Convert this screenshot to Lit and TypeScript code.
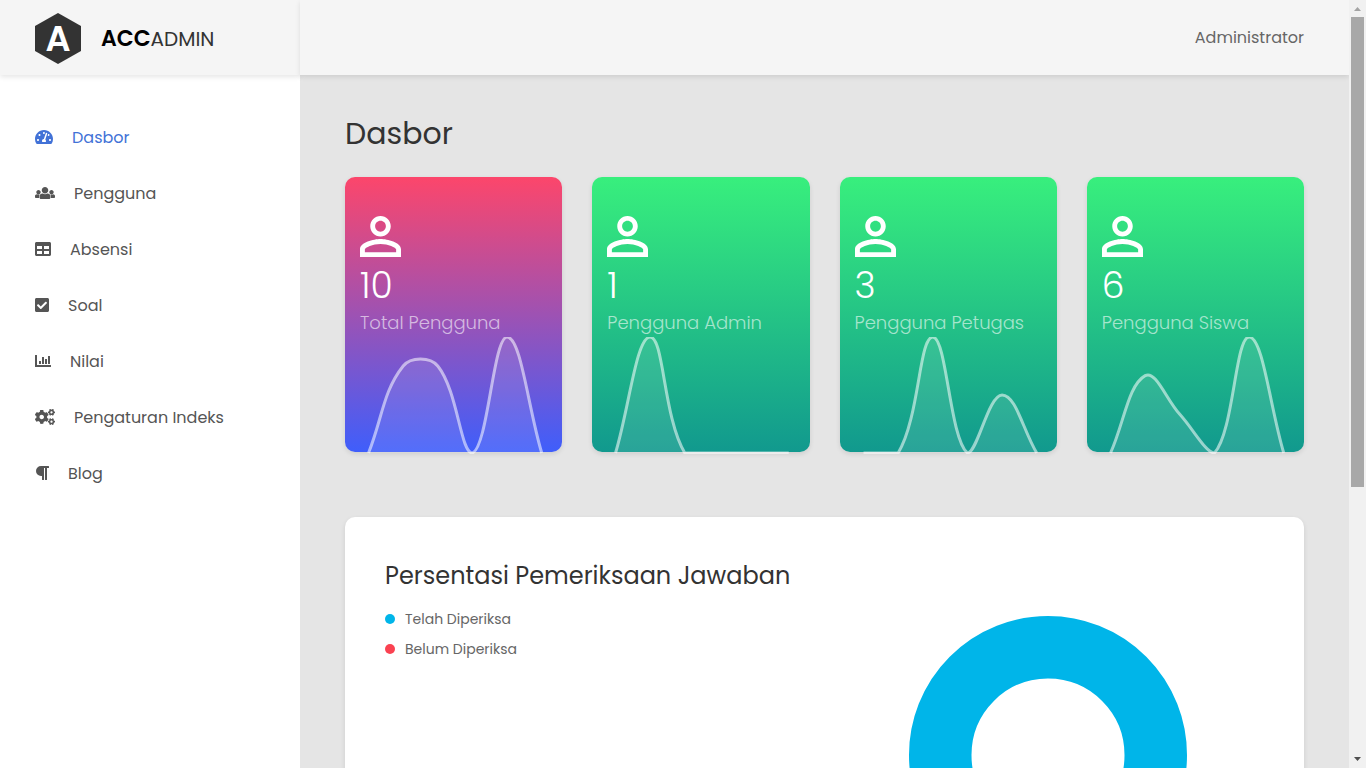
import { LitElement, html, css, svg } from "lit";
import { customElement, property } from "lit/decorators.js";
import { classMap } from "lit/directives/class-map.js";

const SMALL_GEAR =
  "M512.1 191l-8.2 14.3c-3 5.3-9.4 7.5-15.1 5.4-11.8-4.4-22.6-10.7-32.1-18.6-4.6-3.8-5.8-10.5-2.8-15.7l8.2-14.3c-6.9-8-12.3-17.3-15.9-27.4h-16.5c-6 0-11.2-4.3-12.2-10.3-2-12-2.1-24.6 0-37.1 1-6 6.2-10.4 12.2-10.4h16.5c3.6-10.1 9-19.4 15.9-27.4l-8.2-14.3c-3-5.2-1.9-11.9 2.8-15.7 9.5-7.9 20.4-14.2 32.1-18.6 5.7-2.1 12.1.1 15.1 5.4l8.2 14.3c10.5-1.9 21.2-1.9 31.7 0L552 6.3c3-5.3 9.4-7.5 15.1-5.4 11.8 4.4 22.6 10.7 32.1 18.6 4.6 3.8 5.8 10.5 2.8 15.7l-8.2 14.3c6.9 8 12.3 17.3 15.9 27.4h16.5c6 0 11.2 4.3 12.2 10.3 2 12 2.1 24.6 0 37.1-1 6-6.2 10.4-12.2 10.4h-16.5c-3.6 10.1-9 19.4-15.9 27.4l8.2 14.3c3 5.2 1.9 11.9-2.8 15.7-9.5 7.9-20.4 14.2-32.1 18.6-5.7 2.1-12.1-.1-15.1-5.4l-8.2-14.3c-10.4 1.9-21.2 1.9-31.7 0zm-10.5-58.8c38.5 29.6 82.4-14.3 52.8-52.8-38.5-29.7-82.4 14.3-52.8 52.8z";
const BIG_GEAR =
  "M386.3 286.1l33.7 16.8c10.1 5.8 14.5 18.1 10.5 29.1-8.9 24.2-26.4 46.4-42.6 65.8-7.4 8.9-20.2 11.1-30.3 5.3l-29.1-16.8c-16 13.7-34.6 24.6-54.9 31.7v33.6c0 11.6-8.3 21.6-19.7 23.6-24.6 4.2-50.4 4.4-75.9 0-11.5-2-20-11.9-20-23.6V418c-20.3-7.2-38.9-18-54.9-31.7L74 403c-10 5.8-22.9 3.6-30.3-5.3-16.2-19.4-33.3-41.6-42.2-65.7-4-10.9.4-23.2 10.5-29.1l33.3-16.8c-3.9-20.9-3.9-42.4 0-63.4L12 205.8c-10.1-5.8-14.6-18.1-10.5-29 8.9-24.2 26-46.4 42.2-65.8 7.4-8.9 20.2-11.1 30.3-5.3l29.1 16.8c16-13.7 34.6-24.6 54.9-31.7V57.1c0-11.5 8.2-21.5 19.6-23.5 24.6-4.2 50.5-4.4 76-.1 11.5 2 20 11.9 20 23.6v33.6c20.3 7.2 38.9 18 54.9 31.7l29.1-16.8c10-5.8 22.9-3.6 30.3 5.3 16.2 19.4 33.2 41.6 42.1 65.8 4 10.9.1 23.2-10 29.1l-33.7 16.8c3.9 21 3.9 42.5 0 63.5zm-117.6 21.1c59.2-77-28.7-164.9-105.7-105.7-59.2 77 28.7 164.9 105.7 105.7z";

interface MenuItem {
  label: string;
  width: number;
  icon: unknown;
  active?: boolean;
}

const MENU: MenuItem[] = [
  {
    label: "Dasbor",
    width: 576,
    active: true,
    icon: svg`<path d="M288 32C128.94 32 0 160.94 0 320c0 52.8 14.25 102.26 39.06 144.8 5.61 9.62 16.3 15.2 27.44 15.2h443c11.14 0 21.83-5.58 27.44-15.2C561.75 422.26 576 372.8 576 320c0-159.06-128.94-288-288-288zm0 64c14.71 0 26.58 10.13 30.32 23.65-1.11 2.26-2.64 4.23-3.45 6.67l-9.22 27.67c-5.13 3.49-10.97 6.01-17.65 6.01-17.67 0-32-14.33-32-32S270.33 96 288 96zM96 384c-17.67 0-32-14.33-32-32s14.33-32 32-32 32 14.33 32 32-14.33 32-32 32zm48-160c-17.67 0-32-14.33-32-32s14.33-32 32-32 32 14.33 32 32-14.33 32-32 32zm246.77-72.41l-61.33 184C343.13 347.33 352 364.54 352 384c0 11.72-3.38 22.55-8.88 32H232.88c-5.5-9.45-8.88-20.28-8.88-32 0-33.94 26.5-61.43 59.9-63.59l61.34-184.01c4.17-12.56 17.73-19.45 30.36-15.17 12.57 4.19 19.35 17.79 15.17 30.36zm14.66 57.2l15.52-46.55c3.47-1.29 7.13-2.23 11.05-2.23 17.67 0 32 14.33 32 32s-14.33 32-32 32c-11.38-.01-20.89-6.28-26.57-15.22zM480 384c-17.67 0-32-14.33-32-32s14.33-32 32-32 32 14.33 32 32-14.33 32-32 32z"/>`,
  },
  {
    label: "Pengguna",
    width: 640,
    icon: svg`<path d="M320 64c57.99 0 105 47.01 105 105s-47.01 105-105 105-105-47.01-105-105S262.01 64 320 64zm113.463 217.366l-39.982-9.996c-49.168 35.365-108.766 27.473-146.961 0l-39.982 9.996C174.485 289.379 152 318.177 152 351.216V412c0 19.882 16.118 36 36 36h264c19.882 0 36-16.118 36-36v-60.784c0-33.039-22.485-61.837-54.537-69.85zM528 300c38.66 0 70-31.34 70-70s-31.34-70-70-70-70 31.34-70 70 31.34 70 70 70zm-416 0c38.66 0 70-31.34 70-70s-31.34-70-70-70-70 31.34-70 70 31.34 70 70 70zm24 112v-60.784c0-16.551 4.593-32.204 12.703-45.599-29.988 14.72-63.336 8.708-85.69-7.37l-26.655 6.664C14.99 310.252 0 329.452 0 351.477V392c0 13.255 10.745 24 24 24h112.169a52.417 52.417 0 0 1-.169-4zm467.642-107.09l-26.655-6.664c-27.925 20.086-60.89 19.233-85.786 7.218C499.369 318.893 504 334.601 504 351.216V412c0 1.347-.068 2.678-.169 4H616c13.255 0 24-10.745 24-24v-40.523c0-22.025-14.99-41.225-36.358-46.567z"/>`,
  },
  {
    label: "Absensi",
    width: 512,
    icon: svg`<path d="M464 32H48C21.49 32 0 53.49 0 80v352c0 26.51 21.49 48 48 48h416c26.51 0 48-21.49 48-48V80c0-26.51-21.49-48-48-48zM224 416H64v-96h160v96zm0-160H64v-96h160v96zm224 160H288v-96h160v96zm0-160H288v-96h160v96z"/>`,
  },
  {
    label: "Soal",
    width: 448,
    icon: svg`<path d="M400 480H48c-26.51 0-48-21.49-48-48V80c0-26.51 21.49-48 48-48h352c26.51 0 48 21.49 48 48v352c0 26.51-21.49 48-48 48zm-204.686-98.059l184-184c6.248-6.248 6.248-16.379 0-22.627l-22.627-22.627c-6.248-6.248-16.379-6.249-22.628 0L184 302.745l-70.059-70.059c-6.248-6.248-16.379-6.248-22.628 0l-22.627 22.627c-6.248 6.248-6.248 16.379 0 22.627l104 104c6.249 6.25 16.379 6.25 22.628.001z"/>`,
  },
  {
    label: "Nilai",
    width: 512,
    icon: svg`<path d="M500 384c6.6 0 12 5.4 12 12v40c0 6.6-5.4 12-12 12H12c-6.6 0-12-5.4-12-12V76c0-6.6 5.4-12 12-12h40c6.6 0 12 5.4 12 12v308h436zM192 340v-72c0-6.6-5.4-12-12-12h-40c-6.6 0-12 5.4-12 12v72c0 6.6 5.4 12 12 12h40c6.6 0 12-5.4 12-12zm192 0V204c0-6.6-5.4-12-12-12h-40c-6.6 0-12 5.4-12 12v136c0 6.6 5.4 12 12 12h40c6.6 0 12-5.4 12-12zm-96 0V140c0-6.6-5.4-12-12-12h-40c-6.6 0-12 5.4-12 12v200c0 6.6 5.4 12 12 12h40c6.6 0 12-5.4 12-12zm192 0V108c0-6.6-5.4-12-12-12h-40c-6.6 0-12 5.4-12 12v232c0 6.6 5.4 12 12 12h40c6.6 0 12-5.4 12-12z"/>`,
  },
  {
    label: "Pengaturan Indeks",
    width: 640,
    icon: svg`<path d=${SMALL_GEAR}/><path d=${SMALL_GEAR} transform="translate(0 299)"/><path d=${BIG_GEAR}/>`,
  },
  {
    label: "Blog",
    width: 448,
    icon: svg`<path d="M448 48v32a16 16 0 0 1-16 16h-48v368a16 16 0 0 1-16 16h-32a16 16 0 0 1-16-16V96h-32v368a16 16 0 0 1-16 16h-32a16 16 0 0 1-16-16V352h-32a160 160 0 0 1 0-320h240a16 16 0 0 1 16 16z"/>`,
  },
];

const STATS = [
  { count: 10, label: "Total Pengguna", series: [0, 3, 3, 0, 4, 0], accent: true },
  { count: 1, label: "Pengguna Admin", series: [0, 1, 0, 0, 0, 0], accent: false },
  { count: 3, label: "Pengguna Petugas", series: [0, 0, 2, 0, 1, 0], accent: false },
  { count: 6, label: "Pengguna Siswa", series: [0, 2, 1, 0, 3, 0], accent: false },
];

const CHART = { left: 8.5, right: 181.5, bottom: 116, tension: 0.4 };

/** Smooth line through the series; control points are kept inside the plot. */
function splinePath(series: number[]): string {
  const max = Math.max(...series);
  const step = (CHART.right - CHART.left) / (series.length - 1);
  const points = series.map((v, i) => ({
    x: CHART.left + i * step,
    y: CHART.bottom * (1 - v / max),
  }));
  const clamp = (y: number) => Math.min(CHART.bottom, Math.max(0, y));
  const controls = points.map((p, i) => {
    const a = points[i - 1] ?? p;
    const b = points[i + 1] ?? p;
    const da = Math.hypot(p.x - a.x, p.y - a.y);
    const db = Math.hypot(b.x - p.x, b.y - p.y);
    const fa = (CHART.tension * da) / (da + db);
    const fb = (CHART.tension * db) / (da + db);
    return {
      inX: p.x - fa * (b.x - a.x),
      inY: clamp(p.y - fa * (b.y - a.y)),
      outX: p.x + fb * (b.x - a.x),
      outY: clamp(p.y + fb * (b.y - a.y)),
    };
  });
  return points
    .map((p, i) => {
      if (i === 0) return `M${p.x} ${p.y}`;
      const from = controls[i - 1];
      const to = controls[i];
      return `C${from.outX} ${from.outY} ${to.inX} ${to.inY} ${p.x} ${p.y}`;
    })
    .join("");
}

@customElement("stat-card")
export class StatCard extends LitElement {
  @property({ type: Number }) count = 0;
  @property() label = "";
  @property({ type: Boolean }) accent = false;
  @property({ attribute: false }) series: number[] = [];

  static styles = css`
    :host {
      display: block;
    }
    .card {
      box-sizing: border-box;
      padding: 39px 15px 0;
      border-radius: 10px;
      color: #fff;
      background: linear-gradient(#38ef7d, #11998e);
      box-shadow: 0 2px 5px rgba(0, 0, 0, 0.1);
    }
    .accent {
      background: linear-gradient(#fc466b, #3f5efb);
    }
    .person {
      display: block;
      width: 41px;
      height: 41px;
      fill: #fff;
    }
    .count {
      margin: 0;
      padding-top: 2px;
      font-size: 36px;
      line-height: 54px;
      font-weight: 300;
    }
    .label {
      margin: 0;
      padding-bottom: 5px;
      font-size: 18px;
      line-height: 19px;
      font-weight: 300;
      color: rgba(255, 255, 255, 0.6);
      white-space: nowrap;
    }
    .chart {
      display: block;
      width: 100%;
      height: 115px;
      overflow: visible;
    }
    .area {
      fill: rgba(255, 255, 255, 0.1);
    }
    .line {
      fill: none;
      stroke: rgba(255, 255, 255, 0.55);
      stroke-width: 3;
    }
  `;

  render() {
    const line = splinePath(this.series);
    return html`
      <article class=${classMap({ card: true, accent: this.accent })}>
        <svg class="person" viewBox="4 4 16 16" aria-hidden="true">
          <path
            d="M12 5.9c1.16 0 2.1.94 2.1 2.1s-.94 2.1-2.1 2.1S9.9 9.16 9.9 8s.94-2.1 2.1-2.1m0 9c2.97 0 6.1 1.46 6.1 2.1v1.1H5.9V17c0-.64 3.13-2.1 6.1-2.1M12 4C9.79 4 8 5.79 8 8s1.79 4 4 4 4-1.79 4-4-1.79-4-4-4zm0 9c-2.67 0-8 1.34-8 4v3h16v-3c0-2.66-5.33-4-8-4z"
          />
        </svg>
        <h2 class="count">${this.count}</h2>
        <p class="label">${this.label}</p>
        <svg class="chart" viewBox="0 0 187 115" preserveAspectRatio="none" aria-hidden="true">
          <clipPath id="plot"><rect width="187" height="117" /></clipPath>
          <g clip-path="url(#plot)">
            <path class="area" d="${line}Z" />
            <path class="line" d=${line} />
          </g>
        </svg>
      </article>
    `;
  }
}

@customElement("app-root")
export class AppRoot extends LitElement {
  static styles = css`
    :host {
      display: grid;
      grid-template-columns: 300px minmax(0, 1fr) 17px;
      grid-template-rows: minmax(0, 1fr);
      height: 100vh;
      overflow: hidden;
      background: #e5e5e5;
      font-family: Poppins, Inter, "Open Sans", sans-serif;
      font-size: 16px;
      font-weight: 400;
      color: #666;
    }
    .sidebar {
      background: #fff;
    }
    .brand {
      box-sizing: border-box;
      display: flex;
      align-items: center;
      gap: 20px;
      height: 75px;
      padding: 2px 35px 0;
      background: #f5f5f5;
      box-shadow: 0 2px 5px rgba(0, 0, 0, 0.1);
      color: #333;
      font-size: 20px;
      line-height: 30px;
      text-decoration: none;
    }
    .mark {
      width: 46px;
      height: 51px;
      flex: none;
    }
    .mark-letter {
      fill: #fff;
      font-size: 35px;
      font-weight: 600;
      text-anchor: middle;
    }
    .strong {
      color: #000;
      font-size: 22px;
      font-weight: 600;
    }
    .menu {
      list-style: none;
      margin: 0;
      padding: 34px 35px 0;
    }
    .link {
      display: flex;
      align-items: center;
      gap: 19px;
      height: 56px;
      color: #555;
      text-decoration: none;
    }
    .active {
      color: #4272d7;
    }
    .icon {
      flex: none;
      height: 16px;
      fill: currentColor;
    }
    .topbar {
      box-sizing: border-box;
      display: flex;
      align-items: center;
      justify-content: flex-end;
      height: 75px;
      padding: 0 45px;
      background: #f5f5f5;
      box-shadow: 0 2px 5px rgba(0, 0, 0, 0.1);
    }
    .user {
      color: #666;
      text-decoration: none;
    }
    .content {
      padding: 36px 45px 0;
    }
    .title {
      margin: 0 0 21px;
      color: #333;
      font-size: 30px;
      line-height: 45px;
      font-weight: 400;
    }
    .stats {
      display: grid;
      grid-template-columns: repeat(4, minmax(0, 1fr));
      gap: 30px;
    }
    .panel {
      display: grid;
      grid-template-columns: 1fr 1fr;
      gap: 15px;
      margin-top: 65px;
      padding: 40px;
      border-radius: 10px;
      background: #fff;
      box-shadow: 0 2px 5px rgba(0, 0, 0, 0.1);
    }
    .panel-title {
      margin: 0 0 10px;
      color: #333;
      font-size: 24px;
      line-height: 37px;
      font-weight: 400;
      white-space: nowrap;
    }
    .legend {
      list-style: none;
      margin: 0;
      padding: 0;
      font-size: 14px;
      line-height: 30px;
    }
    .legend-item {
      display: flex;
      align-items: center;
      gap: 10px;
    }
    .dot {
      width: 10px;
      height: 10px;
      border-radius: 50%;
      background: #00b5e9;
    }
    .pending {
      background: #fa4251;
    }
    .donut {
      display: block;
      width: 278px;
      height: 278px;
      margin: 59px auto 0;
    }
    .ring {
      fill: none;
      stroke: #00b5e9;
      stroke-width: 62.5;
    }
    .scroll {
      display: flex;
      flex-direction: column;
      align-items: center;
      background: #f1f1f1;
    }
    .arrow {
      width: 17px;
      height: 17px;
      flex: none;
      fill: #a3a3a3;
    }
    .down {
      fill: #505050;
    }
    .track {
      flex: 1;
      width: 13px;
    }
    .thumb {
      height: 64%;
      background: #a8a8a8;
    }
  `;

  render() {
    return html`
      <aside class="sidebar">
        <a class="brand" href="#">
          <svg class="mark" viewBox="0 0 46 51" aria-hidden="true">
            <path d="M23 0 46 13V38L23 51 0 38V13Z" fill="#333" />
            <text class="mark-letter" x="23" y="38">A</text>
          </svg>
          <span><span class="strong">ACC</span>ADMIN</span>
        </a>
        <nav>
          <ul class="menu">
            ${MENU.map(
              (item) => html`<li>
                <a class=${classMap({ link: true, active: !!item.active })} href="#">
                  <svg class="icon" viewBox="0 0 ${item.width} 512" width=${item.width / 32} aria-hidden="true">
                    ${item.icon}
                  </svg>
                  ${item.label}
                </a>
              </li>`
            )}
          </ul>
        </nav>
      </aside>
      <div class="page">
        <header class="topbar"><a class="user" href="#">Administrator</a></header>
        <main class="content">
          <h1 class="title">Dasbor</h1>
          <section class="stats">
            ${STATS.map(
              (s) => html`<stat-card
                .count=${s.count}
                .label=${s.label}
                .series=${s.series}
                .accent=${s.accent}
              ></stat-card>`
            )}
          </section>
          <section class="panel">
            <div>
              <h2 class="panel-title">Persentasi Pemeriksaan Jawaban</h2>
              <ul class="legend">
                <li class="legend-item"><span class="dot"></span>Telah Diperiksa</li>
                <li class="legend-item"><span class="dot pending"></span>Belum Diperiksa</li>
              </ul>
            </div>
            <svg class="donut" viewBox="0 0 278 278" aria-hidden="true">
              <circle class="ring" cx="139" cy="139" r="107.75" />
            </svg>
          </section>
        </main>
      </div>
      <div class="scroll" aria-hidden="true">
        <svg class="arrow" viewBox="0 0 17 17"><path d="M5 11h7L8.5 7Z" /></svg>
        <div class="track"><div class="thumb"></div></div>
        <svg class="arrow down" viewBox="0 0 17 17"><path d="M5 6h7L8.5 10Z" /></svg>
      </div>
    `;
  }
}
